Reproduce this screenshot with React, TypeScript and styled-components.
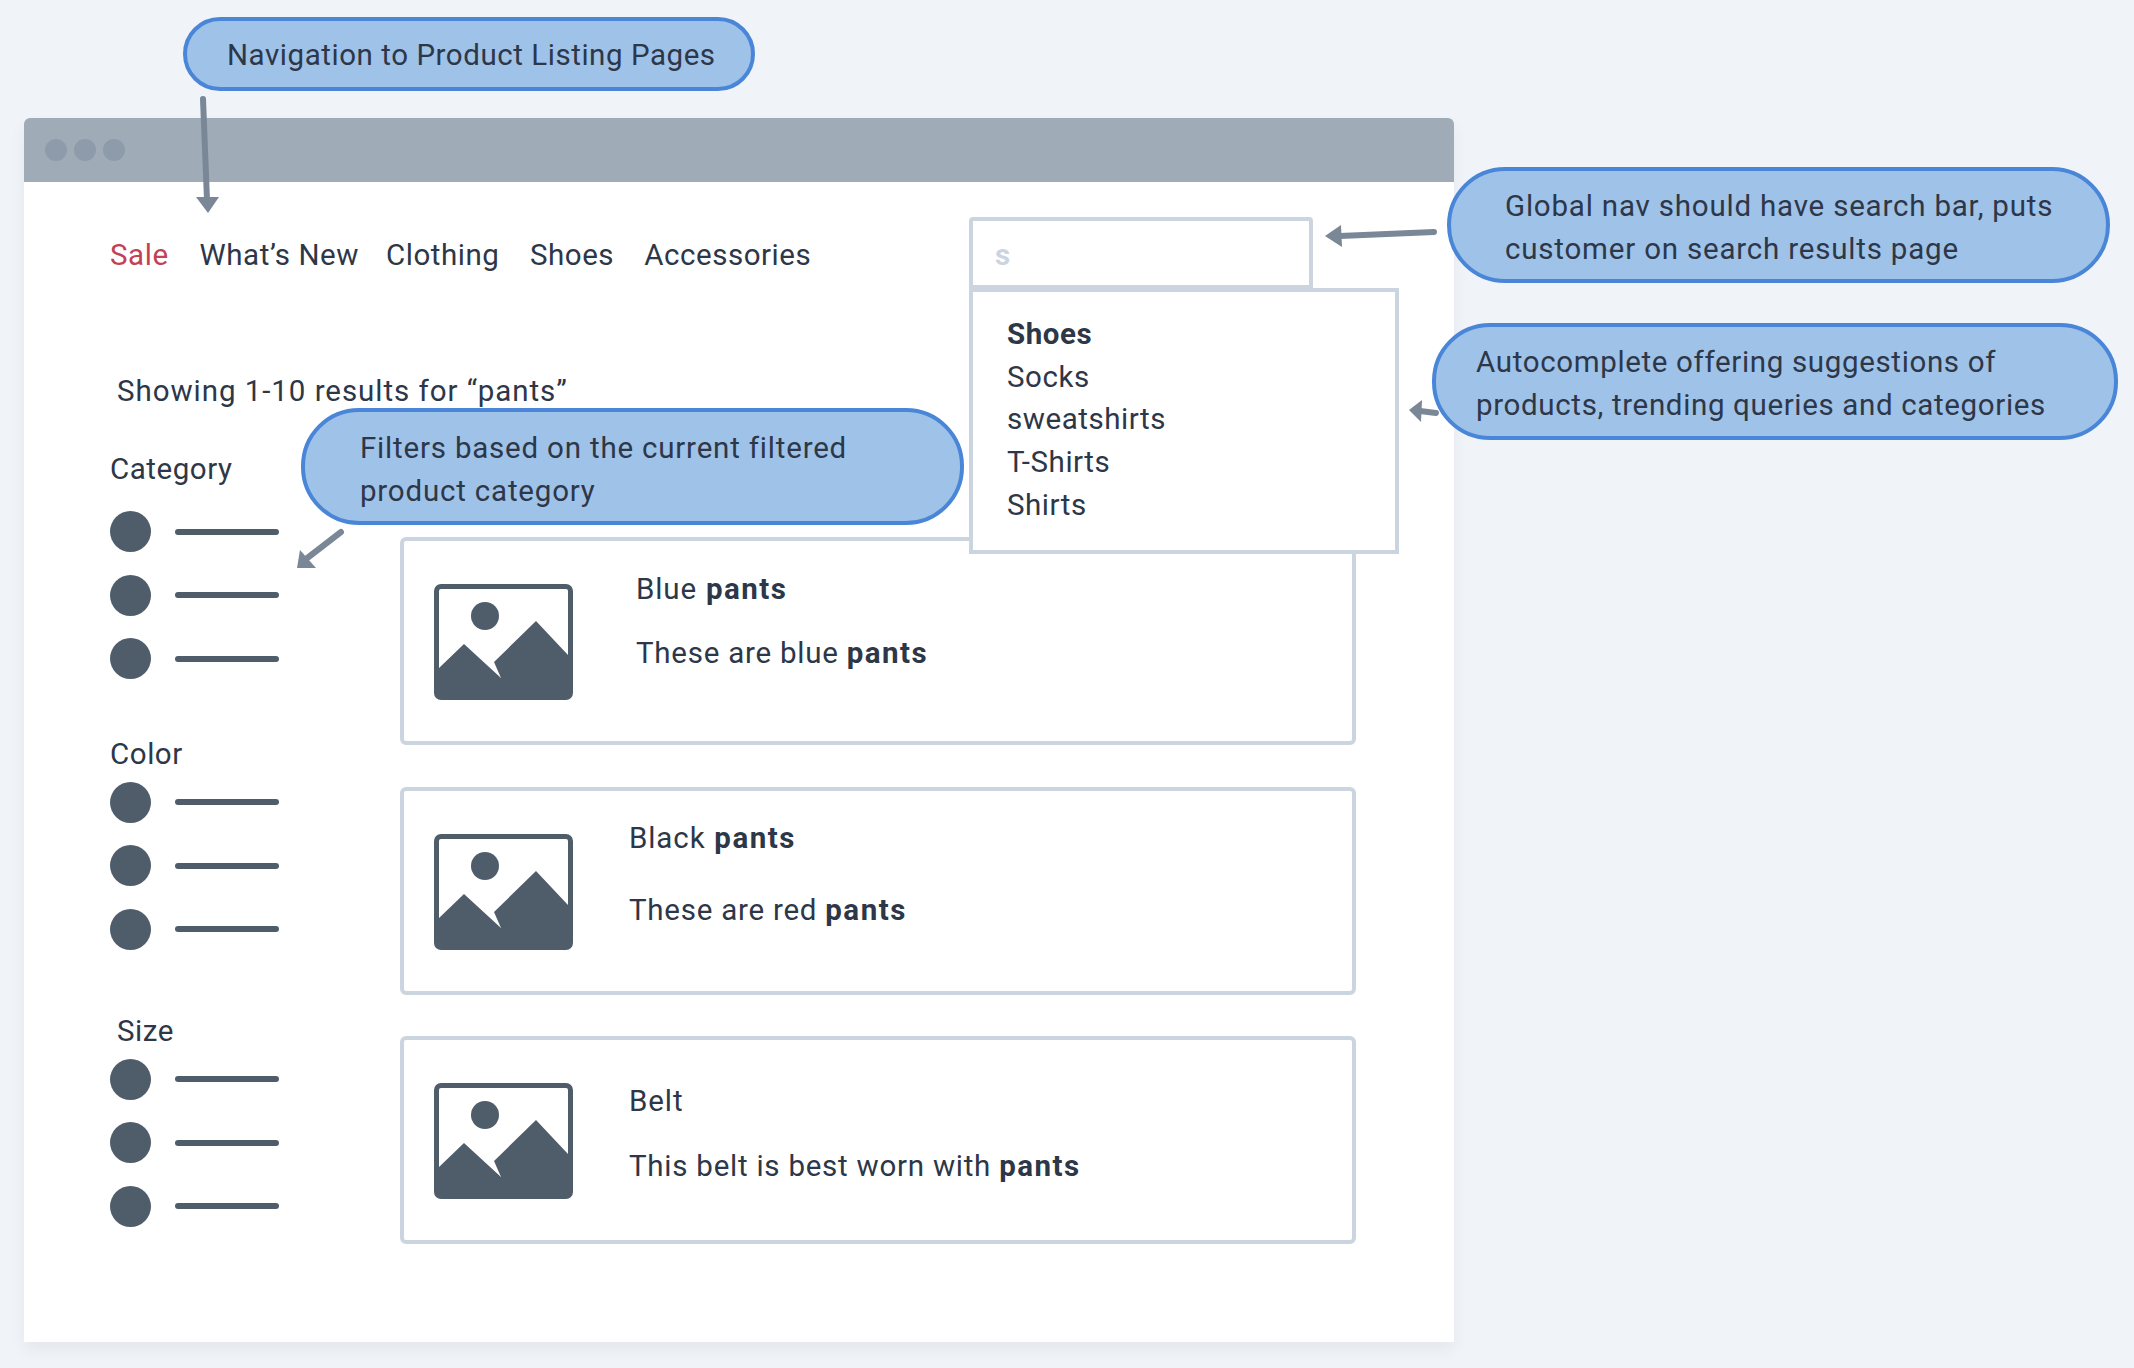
import React from 'react';
import styled, { createGlobalStyle } from 'styled-components';

const GlobalStyle = createGlobalStyle`
  html, body {
    margin: 0;
    padding: 0;
    background-color: #f0f4f8;
  }

  * {
    box-sizing: border-box;
  }
`;

const FILTERS = [
  { label: 'Category', indent: 0, labelGap: 24, groupGap: 0 },
  { label: 'Color', indent: 0, labelGap: 9.5, groupGap: 57 },
  { label: 'Size', indent: 7, labelGap: 10, groupGap: 63 },
];

const PRODUCTS = [
  { title: 'Blue', description: 'These are blue', textLeft: 63, titleTop: 34, descGap: 28 },
  { title: 'Black', description: 'These are red', textLeft: 56, titleTop: 33, descGap: 36 },
  { title: 'Belt', description: 'This belt is best worn with', textLeft: 56, titleTop: 47, descGap: 29, plain: true },
];

const NAV_LINKS = [
  { label: 'Sale', gap: 31, sale: true },
  { label: 'What’s New', gap: 27 },
  { label: 'Clothing', gap: 30.5 },
  { label: 'Shoes', gap: 30 },
  { label: 'Accessories', gap: 0 },
];

const SUGGESTIONS = ['Socks', 'sweatshirts', 'T-Shirts', 'Shirts'];

const ImageIcon: React.FC = () => (
  <PictureSvg viewBox="0 0 139 116">
    <path
      fillRule="evenodd"
      d="M7 0H132A7 7 0 0 1 139 7V109A7 7 0 0 1 132 116H7A7 7 0 0 1 0 109V7A7 7 0 0 1 7 0ZM7 5A2 2 0 0 0 5 7V84L30 60L67 94L60 78L102 37L134 71V7A2 2 0 0 0 132 5Z"
    />
    <circle cx="51" cy="32" r="14" />
  </PictureSvg>
);

const Arrows: React.FC = () => (
  <ArrowSvg viewBox="0 0 2134 1368">
    <line x1="203" y1="99" x2="207" y2="200" />
    <polygon points="196,197 219,197 208,213" />
    <line x1="1434" y1="232" x2="1340" y2="236" />
    <polygon points="1341,225 1342,247 1325,236" />
    <line x1="1436" y1="413" x2="1420" y2="411" />
    <polygon points="1422,400 1421,422 1409,410" />
    <line x1="341" y1="532" x2="306" y2="559" />
    <polygon points="297,568 316,568 300,550" />
  </ArrowSvg>
);

export default function App() {
  return (
    <Page>
      <GlobalStyle />
      <BrowserWindow>
        <TitleBar>
          <WindowDot />
          <WindowDot />
          <WindowDot />
        </TitleBar>
        <Header>
          <Nav>
            {NAV_LINKS.map((link) => (
              <NavLink key={link.label} $gap={link.gap} $sale={link.sale}>
                {link.label}
              </NavLink>
            ))}
          </Nav>
          <SearchBox>
            <SearchText>s</SearchText>
            <Dropdown>
              <Suggestion>
                <strong>Shoes</strong>
              </Suggestion>
              {SUGGESTIONS.map((item) => (
                <Suggestion key={item}>{item}</Suggestion>
              ))}
            </Dropdown>
          </SearchBox>
        </Header>
        <ResultCount>Showing 1-10 results for “pants”</ResultCount>
        <Columns>
          <Sidebar>
            {FILTERS.map((group) => (
              <FilterGroup key={group.label} $gap={group.groupGap}>
                <FilterLabel $indent={group.indent}>{group.label}</FilterLabel>
                <FilterOptions $gap={group.labelGap}>
                  {[0, 1, 2].map((i) => (
                    <FilterOption key={i}>
                      <Radio />
                      <OptionLine />
                    </FilterOption>
                  ))}
                </FilterOptions>
              </FilterGroup>
            ))}
          </Sidebar>
          <Results>
            {PRODUCTS.map((product) => (
              <Card key={product.title}>
                <ImageIcon />
                <CardText $left={product.textLeft} $top={product.titleTop}>
                  <CardTitle>
                    {product.title}
                    {!product.plain && <strong> pants</strong>}
                  </CardTitle>
                  <CardDescription $gap={product.descGap}>
                    {product.description} <strong>pants</strong>
                  </CardDescription>
                </CardText>
              </Card>
            ))}
          </Results>
        </Columns>
      </BrowserWindow>

      <NavCallout>Navigation to Product Listing Pages</NavCallout>
      <SearchCallout>
        Global nav should have search bar, puts
        <br />
        customer on search results page
      </SearchCallout>
      <AutocompleteCallout>
        Autocomplete offering suggestions of
        <br />
        products, trending queries and categories
      </AutocompleteCallout>
      <FiltersCallout>
        Filters based on the current filtered
        <br />
        product category
      </FiltersCallout>
      <Arrows />
    </Page>
  );
}

const Page = styled.div`
  position: relative;
  width: 2134px;
  height: 1368px;
  padding: 118px 0 0 24px;
  overflow: hidden;
  background-color: #f0f4f8;
  font-family: Roboto, 'Liberation Sans', sans-serif;
  font-size: 29.5px;
  letter-spacing: 0.55px;
  color: #2d3748;
`;

const BrowserWindow = styled.div`
  width: 1430px;
  height: 1224px;
  background-color: #fff;
  border-radius: 6px 6px 0 0;
  box-shadow: 0 8px 16px rgba(0, 0, 0, 0.05);
`;

const TitleBar = styled.div`
  display: flex;
  align-items: center;
  gap: 7px;
  height: 64px;
  padding-left: 21px;
  background-color: #9facb8;
  border-radius: 6px 6px 0 0;
`;

const WindowDot = styled.span`
  width: 22px;
  height: 22px;
  border-radius: 50%;
  background-color: #8d9baa;
`;

const Header = styled.header`
  display: flex;
  justify-content: space-between;
  align-items: flex-start;
  height: 71px;
  margin-top: 35px;
  padding: 0 141px 0 86px;
`;

const Nav = styled.nav`
  display: flex;
  height: 76px;
  align-items: center;
`;

const NavLink = styled.a<{ $gap: number; $sale?: boolean }>`
  margin-right: ${(p) => p.$gap}px;
  line-height: 36px;
  color: ${(p) => (p.$sale ? '#c53f55' : '#2d3748')};
`;

const SearchBox = styled.div`
  position: relative;
  width: 344px;
  height: 71px;
  padding: 17px 0 0 22px;
  background-color: #fff;
  border: 4px solid #cbd5e0;
  border-bottom-width: 3px;
  border-radius: 4px 4px 0 0;
`;

const SearchText = styled.span`
  line-height: 30px;
  font-weight: 700;
  color: #cbd5e0;
`;

const Dropdown = styled.div`
  position: absolute;
  top: 67px;
  left: -4px;
  z-index: 1;
  width: 430px;
  height: 266px;
  padding: 21px 0 0 34px;
  background-color: #fff;
  border: 4px solid #cbd5e0;
`;

const Suggestion = styled.div`
  line-height: 42.7px;
`;

const ResultCount = styled.p`
  margin: 85px 0 0;
  padding-left: 93px;
  line-height: 36px;
  letter-spacing: 0.95px;
`;

const Columns = styled.div`
  display: grid;
  grid-template-columns: 290px 956px;
  padding: 42px 0 0 86px;
`;

const Sidebar = styled.aside`
  display: flex;
  flex-direction: column;
`;

const FilterGroup = styled.section<{ $gap: number }>`
  margin-top: ${(p) => p.$gap}px;
`;

const FilterLabel = styled.div<{ $indent: number }>`
  padding-left: ${(p) => p.$indent}px;
  line-height: 36px;
`;

const FilterOptions = styled.div<{ $gap: number }>`
  display: flex;
  flex-direction: column;
  gap: 22.5px;
  margin-top: ${(p) => p.$gap}px;
`;

const FilterOption = styled.div`
  display: flex;
  align-items: center;
  gap: 24px;
`;

const Radio = styled.span`
  width: 41px;
  height: 41px;
  border-radius: 50%;
  background-color: #4f5d6b;
`;

const OptionLine = styled.span`
  width: 104px;
  height: 6px;
  border-radius: 3px;
  background-color: #4f5d6b;
`;

const Results = styled.div`
  display: flex;
  flex-direction: column;
  gap: 41.5px;
  padding-top: 86px;
`;

const Card = styled.article`
  display: flex;
  height: 208px;
  padding: 43px 0 0 30px;
  border: 4px solid #cbd5e0;
  border-radius: 6px;
`;

const PictureSvg = styled.svg`
  flex: none;
  width: 139px;
  height: 116px;
  fill: #4f5d6b;
`;

const CardText = styled.div<{ $left: number; $top: number }>`
  margin: ${(p) => p.$top - 43 - 4}px 0 0 ${(p) => p.$left}px;

  & strong {
    letter-spacing: 1.5px;
  }
`;

const CardTitle = styled.div`
  line-height: 36px;
  letter-spacing: 0.9px;
`;

const CardDescription = styled.div<{ $gap: number }>`
  margin-top: ${(p) => p.$gap}px;
  line-height: 36px;
  letter-spacing: 0.75px;
`;

const Callout = styled.div`
  position: absolute;
  z-index: 2;
  line-height: 42.7px;
  letter-spacing: 0.8px;
  background-color: #9fc2e8;
  border: 4px solid #4a86d8;
  border-radius: 58px;
`;

const NavCallout = styled(Callout)`
  left: 183px;
  top: 17px;
  width: 572px;
  height: 74px;
  padding: 13px 0 0 40px;
  border-radius: 37px;
  letter-spacing: 0.55px;
`;

const SearchCallout = styled(Callout)`
  left: 1447px;
  top: 167px;
  width: 663px;
  height: 116px;
  padding: 14px 0 0 54px;
`;

const AutocompleteCallout = styled(Callout)`
  left: 1432px;
  top: 323px;
  width: 686px;
  height: 117px;
  padding: 14px 0 0 40px;
  letter-spacing: 0.65px;
`;

const FiltersCallout = styled(Callout)`
  left: 301px;
  top: 408px;
  width: 663px;
  height: 117px;
  padding: 15px 0 0 55px;
`;

const ArrowSvg = styled.svg`
  position: absolute;
  left: 0;
  top: 0;
  z-index: 1;
  width: 2134px;
  height: 1368px;
  pointer-events: none;
  fill: #7a8797;
  stroke: #7a8797;

  & line {
    stroke-width: 6;
    stroke-linecap: round;
  }

  & polygon {
    stroke: none;
  }
`;
